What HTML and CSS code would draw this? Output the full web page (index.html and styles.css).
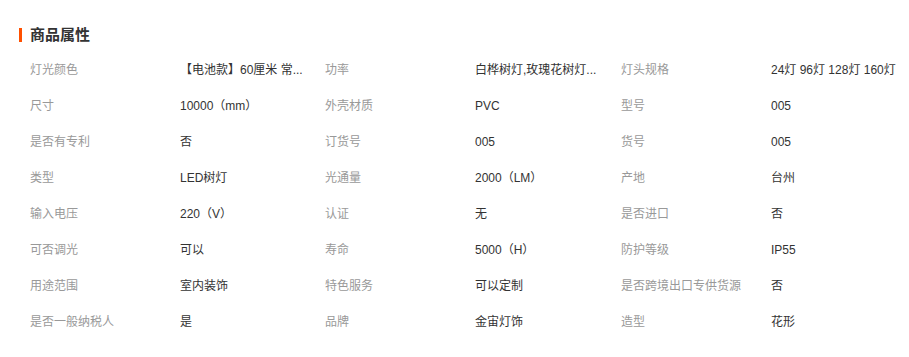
FILE: index.html
```html
<!DOCTYPE html>
<html lang="zh-CN">
<head>
<meta charset="utf-8">
<title>商品属性</title>
<link rel="stylesheet" href="styles.css">
</head>
<body>
<div class="attrs">
  <h2 class="attrs-title">商品属性</h2>
  <div class="attrs-grid">
    <div class="k">灯光颜色</div><div class="v">【电池款】60厘米 常...</div>
    <div class="k">功率</div><div class="v">白桦树灯,玫瑰花树灯...</div>
    <div class="k">灯头规格</div><div class="v">24灯 96灯 128灯 160灯</div>

    <div class="k">尺寸</div><div class="v">10000（mm）</div>
    <div class="k">外壳材质</div><div class="v">PVC</div>
    <div class="k">型号</div><div class="v">005</div>

    <div class="k">是否有专利</div><div class="v">否</div>
    <div class="k">订货号</div><div class="v">005</div>
    <div class="k">货号</div><div class="v">005</div>

    <div class="k">类型</div><div class="v">LED树灯</div>
    <div class="k">光通量</div><div class="v">2000（LM）</div>
    <div class="k">产地</div><div class="v">台州</div>

    <div class="k">输入电压</div><div class="v">220（V）</div>
    <div class="k">认证</div><div class="v">无</div>
    <div class="k">是否进口</div><div class="v">否</div>

    <div class="k">可否调光</div><div class="v">可以</div>
    <div class="k">寿命</div><div class="v">5000（H）</div>
    <div class="k">防护等级</div><div class="v">IP55</div>

    <div class="k">用途范围</div><div class="v">室内装饰</div>
    <div class="k">特色服务</div><div class="v">可以定制</div>
    <div class="k">是否跨境出口专供货源</div><div class="v">否</div>

    <div class="k">是否一般纳税人</div><div class="v">是</div>
    <div class="k">品牌</div><div class="v">金宙灯饰</div>
    <div class="k">造型</div><div class="v">花形</div>
  </div>
</div>
</body>
</html>
```

FILE: styles.css
```css
html, body {
  margin: 0;
  padding: 0;
  background: #ffffff;
}

body {
  font-family: "Liberation Sans", "Noto Sans CJK SC", sans-serif;
  font-size: 12px;
  color: #333333;
}

.attrs {
  padding: 24px 0 0 19px;
}

.attrs-title {
  margin: 0;
  padding-left: 8px;
  border-left: 3px solid #ff5000;
  height: 14px;
  line-height: 14px;
  margin-top: 4px;
  font-size: 15px;
  font-weight: bold;
  color: #333333;
  display: flex;
  align-items: center;
}

.attrs-grid {
  margin-top: 10px;
  padding-left: 11px;
  display: grid;
  grid-template-columns: 150px 145px 150px 146px 150px 1fr;
  grid-auto-rows: 36px;
}

.k, .v {
  line-height: 36px;
  white-space: nowrap;
}

.k {
  color: #999999;
}

.v {
  color: #333333;
}
```
